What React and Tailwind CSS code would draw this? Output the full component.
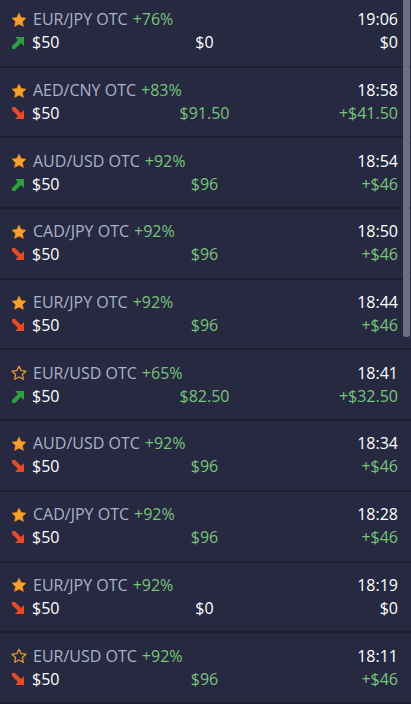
import React from "react";

const TRADES = [
  { fav: true, pair: "EUR/JPY OTC", pct: "+76%", up: true, mid: "$0", time: "19:06", result: "$0" },
  { fav: true, pair: "AED/CNY OTC", pct: "+83%", up: false, mid: "$91.50", time: "18:58", result: "+$41.50" },
  { fav: true, pair: "AUD/USD OTC", pct: "+92%", up: true, mid: "$96", time: "18:54", result: "+$46" },
  { fav: true, pair: "CAD/JPY OTC", pct: "+92%", up: false, mid: "$96", time: "18:50", result: "+$46" },
  { fav: true, pair: "EUR/JPY OTC", pct: "+92%", up: false, mid: "$96", time: "18:44", result: "+$46" },
  { fav: false, pair: "EUR/USD OTC", pct: "+65%", up: true, mid: "$82.50", time: "18:41", result: "+$32.50" },
  { fav: true, pair: "AUD/USD OTC", pct: "+92%", up: false, mid: "$96", time: "18:34", result: "+$46" },
  { fav: true, pair: "CAD/JPY OTC", pct: "+92%", up: false, mid: "$96", time: "18:28", result: "+$46" },
  { fav: true, pair: "EUR/JPY OTC", pct: "+92%", up: false, mid: "$0", time: "18:19", result: "$0" },
  { fav: false, pair: "EUR/USD OTC", pct: "+92%", up: false, mid: "$96", time: "18:11", result: "+$46" },
];

const STAR = "M8 1.2l2.1 4.4 4.8.6-3.5 3.3.9 4.8L8 12l-4.3 2.3.9-4.8L1.1 6.2l4.8-.6z";

function Star({ filled }) {
  return (
    <svg className="h-4 w-4 shrink-0" viewBox="0 0 16 16" aria-hidden="true">
      {filled ? (
        <path d={STAR} fill="#f6a22c" stroke="#f18a1c" strokeWidth="0.8" strokeLinejoin="round" />
      ) : (
        <path d={STAR} fill="none" stroke="#e69a35" strokeWidth="1.3" strokeLinejoin="round" />
      )}
    </svg>
  );
}

function Arrow({ up }) {
  const color = up ? "#2f9e3f" : "#e84a27";
  return (
    <svg className="h-[13px] w-[14px] shrink-0" viewBox="0 0 14 13" aria-hidden="true">
      {up ? (
        <path d="M4 1h9v9l-3-3-6 6H1v-3l6-6z" fill={color} />
      ) : (
        <path d="M4 12h9V3l-3 3-6-6H1v3l6 6z" fill={color} />
      )}
    </svg>
  );
}

function valueColor(v) {
  return v === "$0" ? "text-white" : "text-[#79c47c]";
}

function TradeRow({ trade }) {
  return (
    <div className="flex h-[70.7px] flex-col justify-center border-b-2 border-[#1c1f31] bg-[#262940] pl-[11px] pr-[13px] leading-[23px]">
      <div className="flex items-center justify-between">
        <div className="flex items-center gap-[6px]">
          <Star filled={trade.fav} />
          <span className="text-[#aab2cb]">{trade.pair}</span>
          <span className="-ml-[1px] text-[#79c47c]">{trade.pct}</span>
        </div>
        <span className="font-medium text-white">{trade.time}</span>
      </div>
      <div className="grid grid-cols-[1fr_auto_1fr] items-center">
        <div className="flex items-center gap-[7px]">
          <Arrow up={trade.up} />
          <span className="text-white">$50</span>
        </div>
        <span className={valueColor(trade.mid)}>{trade.mid}</span>
        <span className={`text-right ${valueColor(trade.result)}`}>{trade.result}</span>
      </div>
    </div>
  );
}

export default function App() {
  return (
    <div className="relative h-[704px] w-[411px] overflow-hidden bg-[#1c1f31] font-['Open_Sans',sans-serif] text-[16px]">
      <div className="-mt-[3px]">
        {TRADES.map((t, i) => (
          <TradeRow key={i} trade={t} />
        ))}
      </div>
      <div className="absolute right-[1px] top-0 h-[337px] w-[7px] rounded-b-[3px] bg-[#6c6f7e]" />
    </div>
  );
}
